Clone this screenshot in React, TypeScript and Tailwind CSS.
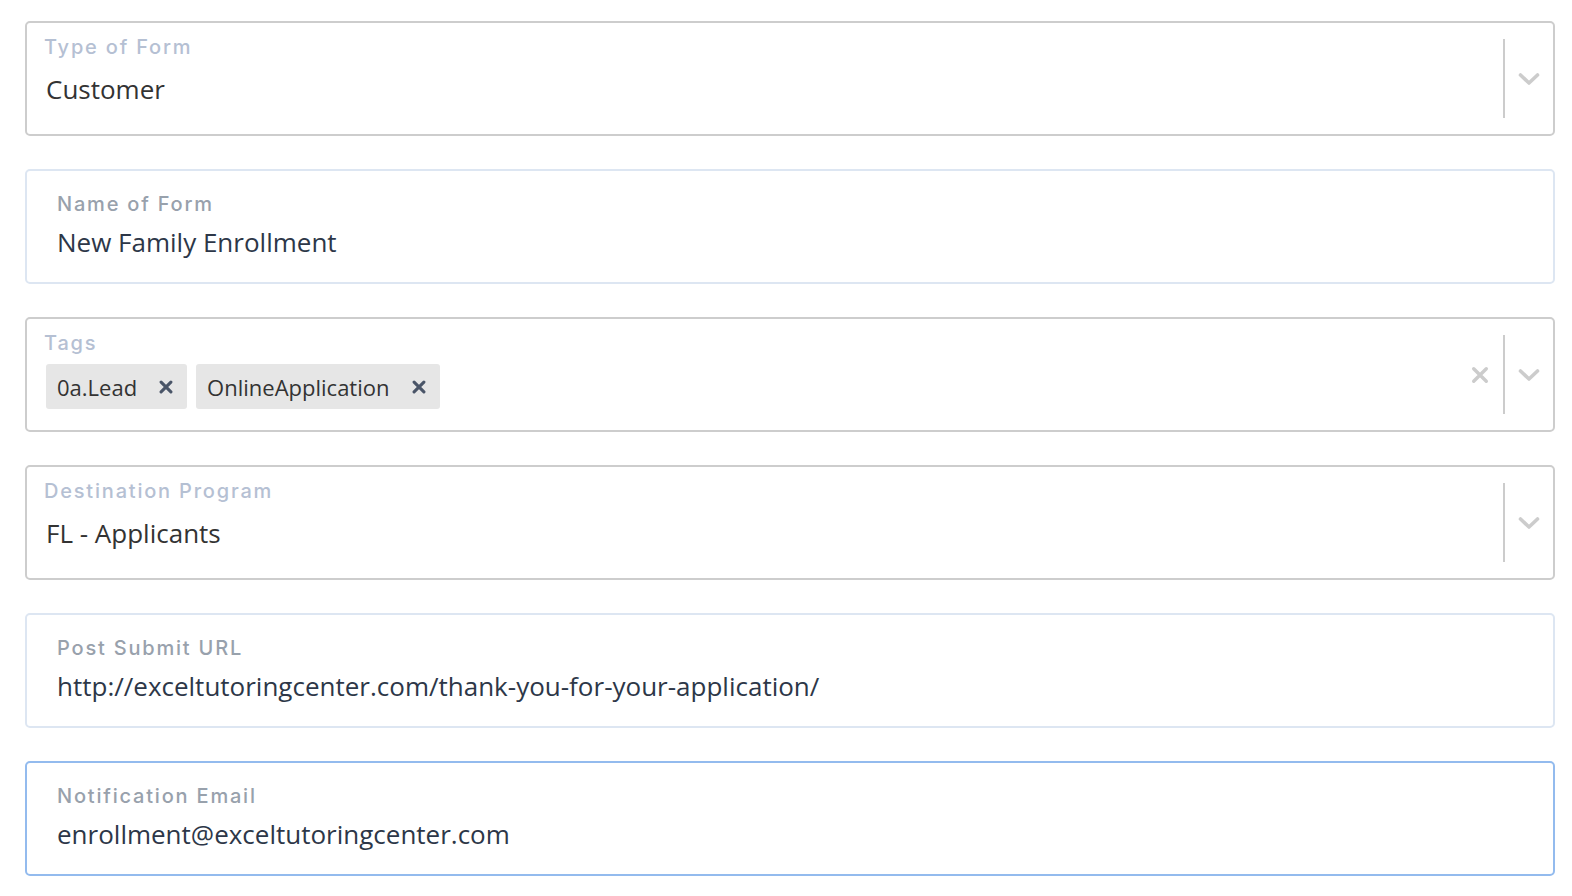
import React from "react";

const labelFont = { fontFamily: "Inter, 'Noto Sans', sans-serif" };
const valueFont = { fontFamily: "'Open Sans', 'Noto Sans', sans-serif" };

function Chevron() {
  return (
    <svg width="22" height="14" viewBox="0 0 22 14" fill="none">
      <path d="M2.5 3 L11 11 L19.5 3" stroke="#cccccc" strokeWidth="3.6" strokeLinecap="round" strokeLinejoin="round" />
    </svg>
  );
}

function ClearX({ size = 18, color = "#cccccc", stroke = 3.8 }: { size?: number; color?: string; stroke?: number }) {
  return (
    <svg width={size} height={size} viewBox="0 0 20 20" fill="none">
      <path d="M3 3 L17 17 M17 3 L3 17" stroke={color} strokeWidth={stroke} strokeLinecap="round" />
    </svg>
  );
}

function SelectField({ label, children, clearable }: { label: string; children: React.ReactNode; clearable?: boolean }) {
  return (
    <div className="flex h-[115px] rounded-[5px] border-2 border-[#cdcdcd] bg-white">
      <div className="flex-1 flex flex-col pl-[17px] pt-[10px]">
        <span className="text-[20px] leading-[28px] font-medium tracking-[1.8px] text-[#b5c0d3]" style={labelFont}>
          {label}
        </span>
        {children}
      </div>
      {clearable && (
        <div className="flex items-center pr-[14px]">
          <ClearX />
        </div>
      )}
      <div className="flex items-center">
        <div className="w-[2px] h-[79px] bg-[#cccccc]" />
        <div className="w-[48px] flex items-center justify-center">
          <Chevron />
        </div>
      </div>
    </div>
  );
}

function TextField({ label, value, focused }: { label: string; value: string; focused?: boolean }) {
  return (
    <div
      className={
        "flex flex-col h-[115px] rounded-[5px] border-2 bg-white pl-[30px] pt-[19px] " +
        (focused ? "border-[#93bbee]" : "border-[#dde6f2]")
      }
    >
      <span className="text-[20px] leading-[28px] font-medium tracking-[1.8px] text-[#98a1ac]" style={labelFont}>
        {label}
      </span>
      <span className="mt-[8px] text-[26px] leading-[32px] text-[#2d3748]" style={valueFont}>
        {value}
      </span>
    </div>
  );
}

function Tag({ text }: { text: string }) {
  return (
    <div className="flex items-center h-[45px] rounded-[3px] bg-[#e6e6e6] pl-[11px] pr-[14px] gap-[22px]">
      <span className="text-[22px] leading-[30px] text-[#333333]" style={valueFont}>
        {text}
      </span>
      <ClearX size={14} color="#4a5568" stroke={4.4} />
    </div>
  );
}

export default function App() {
  return (
    <div className="min-h-screen bg-white pl-[25px] pr-[17px] pt-[21px] flex flex-col gap-[33px]">
      <SelectField label="Type of Form">
        <span className="mt-[12px] text-[26px] leading-[32px] text-[#333333] pl-[2px]" style={valueFont}>
          Customer
        </span>
      </SelectField>

      <TextField label="Name of Form" value="New Family Enrollment" />

      <SelectField label="Tags" clearable>
        <div className="mt-[7px] flex gap-[9px] pl-[2px]">
          <Tag text="0a.Lead" />
          <Tag text="OnlineApplication" />
        </div>
      </SelectField>

      <SelectField label="Destination Program">
        <span className="mt-[12px] text-[26px] leading-[32px] text-[#333333] pl-[2px]" style={valueFont}>
          FL - Applicants
        </span>
      </SelectField>

      <TextField label="Post Submit URL" value="http://exceltutoringcenter.com/thank-you-for-your-application/" />

      <TextField label="Notification Email" value="enrollment@exceltutoringcenter.com" focused />
    </div>
  );
}
